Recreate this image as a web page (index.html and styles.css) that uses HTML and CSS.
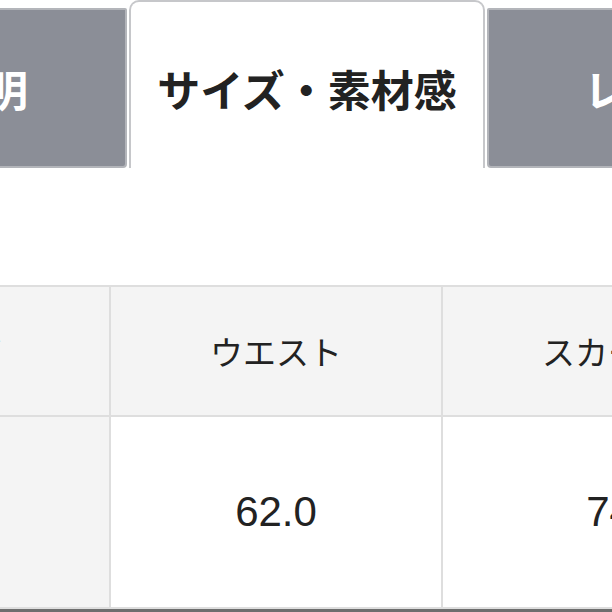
FILE: index.html
```html
<!DOCTYPE html>
<html lang="ja">
<head>
    <meta charset="UTF-8">
    <meta name="viewport" content="width=device-width, initial-scale=1.0">
    <title>サイズ・素材感</title>
    <link rel="stylesheet" href="styles.css">
</head>
<body>
    <div class="page">
        <!-- タブ -->
        <div class="tabs">
            <div class="tab tab-left">商品説明</div>
            <div class="tab active">サイズ・素材感</div>
            <div class="tab tab-right">レビュー</div>
        </div>

        <!-- サイズ表 -->
        <table class="size-table">
            <colgroup>
                <col class="col-first">
                <col class="col">
                <col class="col">
            </colgroup>
            <tr class="head-row">
                <th class="label">サイズ</th>
                <th>ウエスト</th>
                <th>スカート</th>
            </tr>
            <tr class="data-row">
                <th class="label">F</th>
                <td>62.0</td>
                <td class="skirt">74.0</td>
            </tr>
        </table>

        <div class="bottom-bar"></div>
    </div>
</body>
</html>
```

FILE: styles.css
```css
body {
    margin: 0;
    padding: 0;
    background-color: #fff;
    font-family: "Liberation Sans", "Noto Sans CJK JP", sans-serif;
    color: #222;
}
.page {
    width: 612px;
    height: 612px;
    overflow: hidden;
}
.tabs {
    display: flex;
    align-items: flex-end;
    gap: 2px;
    height: 168px;
    margin-left: -229px;
}
.tab {
    flex: 0 0 356px;
    box-sizing: border-box;
    height: 160px;
    display: flex;
    align-items: center;
    justify-content: center;
    font-family: "Noto Sans CJK JP", sans-serif;
    font-size: 43px;
    font-weight: bold;
    color: #fff;
    background-color: #8b8e97;
    border: 2px solid #b3b5ba;
    border-radius: 2px 2px 4px 4px;
}
.tab-left {
    padding-right: 14px;
}
.tab-right {
    padding-left: 10px;
}
.tab.active {
    height: 168px;
    padding-top: 6px;
    background-color: #fff;
    color: #222;
    border-color: #c6c7ca;
    border-bottom: none;
    border-radius: 10px 10px 0 0;
}
.size-table {
    width: 969px;
    margin-top: 117px;
    margin-left: -196px;
    border-collapse: collapse;
    table-layout: fixed;
}
.col-first {
    width: 305px;
}
.col {
    width: 332px;
}
.size-table th, .size-table td {
    border: 2px solid #dedede;
    text-align: center;
    padding: 0;
}
.size-table .label {
    padding-right: 10px;
}
.head-row th {
    height: 128px;
    background-color: #f4f4f4;
    font-family: "Noto Sans CJK JP", sans-serif;
    font-size: 33px;
    font-weight: normal;
}
.data-row th {
    height: 190px;
    background-color: #f4f4f4;
    font-weight: normal;
    font-size: 42px;
}
.data-row td {
    background-color: #fff;
    font-size: 42px;
}
.size-table .skirt {
    padding-left: 38px;
}
.bottom-bar {
    height: 6px;
    background-color: #6e6e6e;
}
```
